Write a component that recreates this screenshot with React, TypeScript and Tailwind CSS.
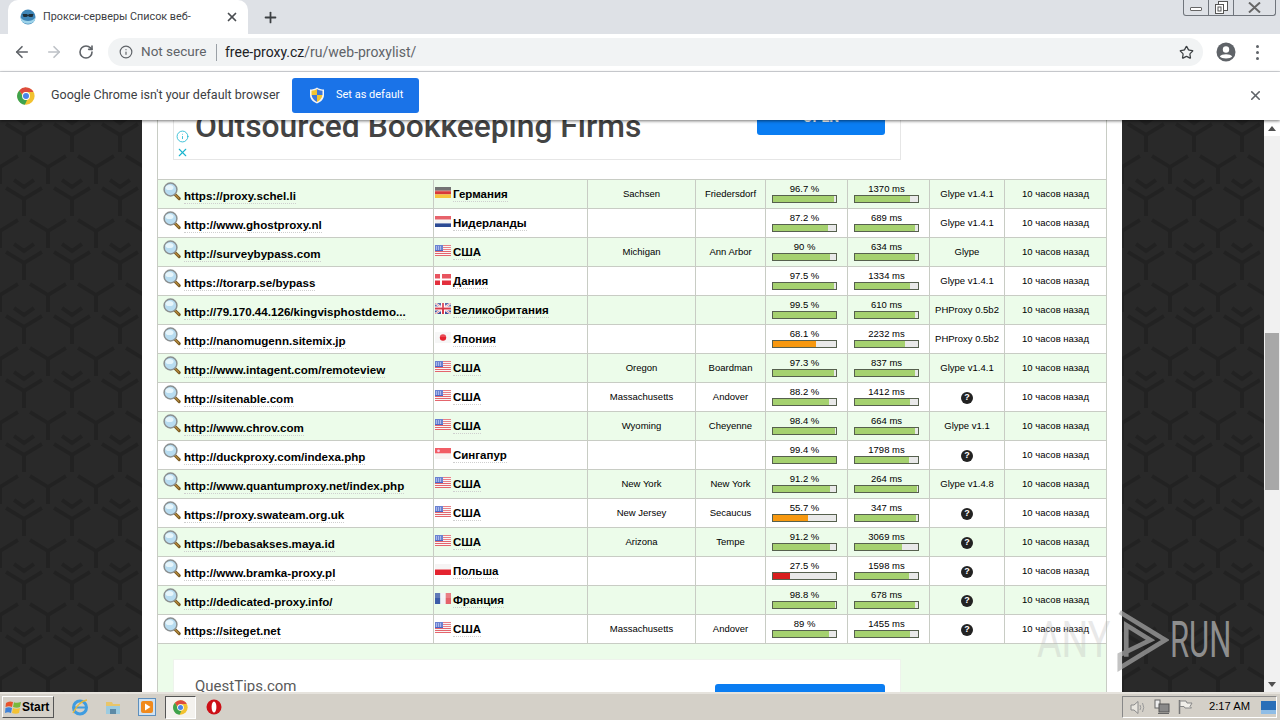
import React from "react";
import { ArrowLeft, ArrowRight, RotateCw, Star, X, Plus, Info } from "lucide-react";

type Row = { url: string; flag: string; country: string; region: string; city: string; up: number; ms: number; sp: number; type: string };

const rows: Row[] = [
  { url: "https://proxy.schel.li", flag: "de", country: "Германия", region: "Sachsen", city: "Friedersdorf", up: 96.7, ms: 1370, sp: 88, type: "Glype v1.4.1" },
  { url: "http://www.ghostproxy.nl", flag: "nl", country: "Нидерланды", region: "", city: "", up: 87.2, ms: 689, sp: 95, type: "Glype v1.4.1" },
  { url: "http://surveybypass.com", flag: "us", country: "США", region: "Michigan", city: "Ann Arbor", up: 90, ms: 634, sp: 95, type: "Glype" },
  { url: "https://torarp.se/bypass", flag: "dk", country: "Дания", region: "", city: "", up: 97.5, ms: 1334, sp: 88, type: "Glype v1.4.1" },
  { url: "http://79.170.44.126/kingvisphostdemo...", flag: "gb", country: "Великобритания", region: "", city: "", up: 99.5, ms: 610, sp: 96, type: "PHProxy 0.5b2" },
  { url: "http://nanomugenn.sitemix.jp", flag: "jp", country: "Япония", region: "", city: "", up: 68.1, ms: 2232, sp: 80, type: "PHProxy 0.5b2" },
  { url: "http://www.intagent.com/remoteview", flag: "us", country: "США", region: "Oregon", city: "Boardman", up: 97.3, ms: 837, sp: 95, type: "Glype v1.4.1" },
  { url: "http://sitenable.com", flag: "us", country: "США", region: "Massachusetts", city: "Andover", up: 88.2, ms: 1412, sp: 88, type: "?" },
  { url: "http://www.chrov.com", flag: "us", country: "США", region: "Wyoming", city: "Cheyenne", up: 98.4, ms: 664, sp: 95, type: "Glype v1.1" },
  { url: "http://duckproxy.com/indexa.php", flag: "sg", country: "Сингапур", region: "", city: "", up: 99.4, ms: 1798, sp: 85, type: "?" },
  { url: "http://www.quantumproxy.net/index.php", flag: "us", country: "США", region: "New York", city: "New York", up: 91.2, ms: 264, sp: 98, type: "Glype v1.4.8" },
  { url: "https://proxy.swateam.org.uk", flag: "us", country: "США", region: "New Jersey", city: "Secaucus", up: 55.7, ms: 347, sp: 97, type: "?" },
  { url: "https://bebasakses.maya.id", flag: "us", country: "США", region: "Arizona", city: "Tempe", up: 91.2, ms: 3069, sp: 75, type: "?" },
  { url: "http://www.bramka-proxy.pl", flag: "pl", country: "Польша", region: "", city: "", up: 27.5, ms: 1598, sp: 86, type: "?" },
  { url: "http://dedicated-proxy.info/", flag: "fr", country: "Франция", region: "", city: "", up: 98.8, ms: 678, sp: 95, type: "?" },
  { url: "https://siteget.net", flag: "us", country: "США", region: "Massachusetts", city: "Andover", up: 89, ms: 1455, sp: 87, type: "?" },
];

function Flag({ code }: { code: string }) {
  const body = () => {
    switch (code) {
      case "de":
        return (<><rect width="16" height="3.7" y="0" fill="#555" /><rect width="16" height="3.7" y="3.7" fill="#d8393a" /><rect width="16" height="3.6" y="7.4" fill="#f7c43c" /></>);
      case "nl":
        return (<><rect width="16" height="3.7" y="0" fill="#e2404a" /><rect width="16" height="3.7" y="3.7" fill="#f4f4f4" /><rect width="16" height="3.6" y="7.4" fill="#2c4a94" /></>);
      case "us":
        return (
          <>
            <rect width="16" height="11" fill="#f6f6f6" />
            {[0, 2, 4, 6, 8, 10].map((y) => (<rect key={y} y={y} width="16" height="1" fill="#e4656c" />))}
            <rect width="8" height="6" fill="#4a67c8" />
            {[1, 3, 5].map((x) => [1.5, 3.5].map((y) => (<rect key={x + "-" + y} x={x} y={y} width="1" height="1" fill="#dfe6ff" />)))}
          </>
        );
      case "dk":
        return (<><rect width="16" height="11" fill="#e32f3c" /><rect x="5" width="2" height="11" fill="#fff" /><rect y="4.5" width="16" height="2" fill="#fff" /></>);
      case "gb":
        return (
          <>
            <rect width="16" height="11" fill="#3d4f9a" />
            <path d="M0 0L16 11M16 0L0 11" stroke="#fff" strokeWidth="2" />
            <path d="M0 0L16 11M16 0L0 11" stroke="#d5505c" strokeWidth="0.7" />
            <rect x="6" width="4" height="11" fill="#fff" />
            <rect y="3.5" width="16" height="4" fill="#fff" />
            <rect x="7" width="2" height="11" fill="#d83a48" />
            <rect y="4.5" width="16" height="2" fill="#d83a48" />
          </>
        );
      case "jp":
        return (<><rect width="16" height="11" fill="#f6f6f6" /><circle cx="8" cy="5.5" r="3.2" fill="#e5232f" /></>);
      case "sg":
        return (<><rect width="16" height="5.5" fill="#ee3a44" /><rect y="5.5" width="16" height="5.5" fill="#f8f3f1" /><circle cx="3.5" cy="2.8" r="1.4" fill="#fbd" /></>);
      case "pl":
        return (<><rect width="16" height="5.5" fill="#f5f2f2" /><rect y="5.5" width="16" height="5.5" fill="#e4232f" /></>);
      case "fr":
        return (<><rect width="5.4" height="11" fill="#3c5ca8" /><rect x="5.4" width="5.3" height="11" fill="#f2f2f6" /><rect x="10.7" width="5.3" height="11" fill="#e4626a" /></>);
      default:
        return null;
    }
  };
  return (
    <svg width="16" height="11" viewBox="0 0 16 11" className="shrink-0">
      {body()}
      <rect width="16" height="5" fill="#ffffff" opacity="0.18" />
    </svg>
  );
}

function Magnifier() {
  return (
    <svg width="18" height="19" viewBox="0 0 18 19" className="shrink-0">
      <path d="M11 11.5L16.2 16.6" stroke="#7a5a22" strokeWidth="3" strokeLinecap="round" />
      <path d="M11.5 12L15.8 16.2" stroke="#d8a648" strokeWidth="1" strokeLinecap="round" />
      <circle cx="7.5" cy="7.5" r="6.4" fill="#b8dcf0" stroke="#8a8f90" strokeWidth="1.5" />
      <ellipse cx="6.5" cy="5.5" rx="4" ry="2.6" fill="#e6f5fb" />
    </svg>
  );
}

function Bar({ label, pct, color }: { label: string; pct: number; color: string }) {
  return (
    <div className="ml-[6px] flex w-[65px] flex-col items-center pt-[3px]">
      <div className="h-[12px] whitespace-nowrap text-[9.5px] leading-[12px]">{label}</div>
      <div className="h-[8px] w-full border border-[#56604e] bg-[#e9e9e9]">
        <div className="h-full" style={{ width: pct + "%", backgroundColor: color }} />
      </div>
    </div>
  );
}

function Pattern({ id }: { id: string }) {
  return (
    <svg className="block h-full w-full" aria-hidden="true">
      <defs>
        <pattern id={id} width="48" height="64" patternUnits="userSpaceOnUse">
          <rect width="48" height="64" fill="#292929" />
          <g fill="none" stroke="#222222" strokeWidth="4">
            <path d="M6 4L24 15L42 4M24 15V32" />
            <path d="M-18 36L0 47L18 36M0 47V64" />
            <path d="M30 36L48 47L66 36M48 47V64" />
            <path d="M14 -4L24 3L34 -4" />
            <path d="M14 60L24 67L34 60" />
          </g>
        </pattern>
      </defs>
      <rect width="100%" height="100%" fill={"url(#" + id + ")"} />
    </svg>
  );
}

function ChromeIcon({ size }: { size: number }) {
  return (
    <svg width={size} height={size} viewBox="0 0 48 48" className="shrink-0">
      <circle cx="24" cy="24" r="23" fill="#f2c230" />
      <path d="M24 1A23 23 0 0 1 44 13H24A11 11 0 0 0 13.6 20.5L6 9A23 23 0 0 1 24 1Z" fill="#dd4b3e" />
      <path d="M6 9L15 24A10 10 0 0 0 27 34L21 47A23 23 0 0 1 6 9Z" fill="#3fa34d" />
      <circle cx="24" cy="24" r="10.5" fill="#fff" />
      <circle cx="24" cy="24" r="8" fill="#4a85e8" />
    </svg>
  );
}

function Shield() {
  return (
    <svg width="16" height="17" viewBox="0 0 16 17" className="shrink-0">
      <path d="M8 0.5C10 2 12.5 2.5 15 2.5V8C15 12 12 15 8 16.5C4 15 1 12 1 8V2.5C3.5 2.5 6 2 8 0.5Z" fill="#f5f5f5" />
      <path d="M8 2C9.5 3 11.5 3.6 13.5 3.7V8H8Z" fill="#3f78d8" />
      <path d="M8 8H2.5V3.7C4.5 3.6 6.5 3 8 2Z" fill="#f4c430" />
      <path d="M8 8H13.4C13 11 11 13.5 8 15Z" fill="#f4c430" />
      <path d="M8 8V15C5 13.5 3 11 2.6 8Z" fill="#3f78d8" />
    </svg>
  );
}

function Cell({ children, className = "" }: { children?: React.ReactNode; className?: string }) {
  return <div className={"flex items-center justify-center border-l border-[#c8ccc4] pt-[1px] " + className}>{children}</div>;
}

function ProxyRow({ r, i }: { r: Row; i: number }) {
  const upColor = r.up < 40 ? "#d81e1e" : r.up < 70 ? "#f7980f" : "#a5d16f";
  return (
    <div className={"grid h-[29px] grid-cols-[275px_154px_108px_70px_82px_82px_75px_102px] border-b border-[#c8ccc4] font-['Liberation_Sans',sans-serif] text-black " + (i % 2 === 0 ? "bg-[#ecfcea]" : "bg-white")}>
      <div className="flex items-start pl-[5px] pt-[2px]">
        <Magnifier />
        <a className="ml-[3px] mt-[7px] whitespace-nowrap border-b border-dotted border-[#cfcfcf] text-[11.6px] font-bold leading-[14px]">{r.url}</a>
      </div>
      <div className="flex items-start border-l border-[#c8ccc4] pl-[1px] pt-[7px]">
        <Flag code={r.flag} />
        <span className="ml-[2px] whitespace-nowrap border-b border-dotted border-[#cfcfcf] text-[11.5px] font-bold leading-[14px]">{r.country}</span>
      </div>
      <Cell className="text-[9.5px]">{r.region}</Cell>
      <Cell className="text-[9.5px]">{r.city}</Cell>
      <div className="border-l border-[#c8ccc4]">
        <Bar label={r.up + " %"} pct={r.up} color={upColor} />
      </div>
      <div className="border-l border-[#c8ccc4]">
        <Bar label={r.ms + " ms"} pct={r.sp} color="#a5d16f" />
      </div>
      <Cell className="whitespace-nowrap text-[9.5px]">
        {r.type === "?" ? (
          <span className="flex h-[12px] w-[12px] items-center justify-center rounded-full bg-[#222] text-[9px] font-bold leading-none text-white">?</span>
        ) : (
          r.type
        )}
      </Cell>
      <Cell className="whitespace-nowrap text-[9.5px]">10 часов назад</Cell>
    </div>
  );
}

export default function App() {
  const ui = "font-['Roboto',sans-serif]";
  return (
    <div className={"relative flex h-[720px] w-[1280px] flex-col overflow-hidden bg-white " + ui}>
      {/* Tab strip */}
      <div className="relative h-[34px] shrink-0 bg-[#dee1e6]">
        <div className="flex h-full items-center pl-[8px]">
          <div className="flex h-[34px] w-[240px] items-center rounded-t-[10px] bg-white pl-[12px]">
            <svg width="16" height="16" viewBox="0 0 16 16" className="shrink-0">
              <circle cx="8" cy="8" r="7.5" fill="#3f86b8" />
              <path d="M1 9C4 13 12 13 15 9V11C13 16 3 16 1 11Z" fill="#9fd4ea" />
              <path d="M2.5 5H7L8 6L9 5H13.5L12.5 8H9.5L8 7L6.5 8H3.5Z" fill="#1f2f3a" />
            </svg>
            <span className="ml-[7px] w-[182px] shrink-0 whitespace-nowrap text-[10.8px] text-[#3c4043]">Прокси-серверы Список веб-</span>
            <X size={14} strokeWidth={3} className="shrink-0 text-[#4a4d51]" />
          </div>
          <Plus size={17} strokeWidth={2.5} className="ml-[14px] text-[#3c4043]" />
        </div>
        <div className="absolute right-[4px] top-0 flex h-[16px] w-[93px] rounded-b-[3px] border border-t-0 border-[#70757c]">
          <div className="flex w-[25px] items-center justify-center border-r border-[#70757c]">
            <div className="mt-[3px] h-[4px] w-[12px] rounded-[1px] border border-[#666] bg-white" />
          </div>
          <div className="flex w-[25px] items-center justify-center border-r border-[#70757c]">
            <svg width="13" height="13" viewBox="0 0 13 13"><rect x="3.5" y="0.5" width="9" height="9" fill="#fff" stroke="#555" /><rect x="0.5" y="3.5" width="8" height="9" fill="#fff" stroke="#555" /><rect x="3" y="6" width="3" height="4" fill="none" stroke="#555" /></svg>
          </div>
          <div className="flex flex-1 items-center justify-center">
            <svg width="13" height="11" viewBox="0 0 13 11"><path d="M1 0.5L6.5 5.5L12 0.5M1 10.5L6.5 5.5L12 10.5" fill="none" stroke="#666" strokeWidth="2" /></svg>
          </div>
        </div>
      </div>

      {/* Toolbar */}
      <div className="flex h-[38px] shrink-0 items-center border-b border-[#dadce0] bg-white pb-[1px] pl-[13px] pr-[13px]">
        <ArrowLeft size={18} strokeWidth={2.2} className="text-[#5f6368]" />
        <ArrowRight size={18} strokeWidth={2.2} className="ml-[14px] text-[#bdc1c6]" />
        <RotateCw size={16} strokeWidth={2.4} className="ml-[15px] text-[#5f6368]" />
        <div className="ml-[14px] flex h-[28px] w-[1095px] items-center rounded-full bg-[#f1f3f4] pl-[11px] pr-[9px]">
          <Info size={14} strokeWidth={2} className="text-[#5f6368]" />
          <span className="ml-[8px] w-[66px] whitespace-nowrap text-[13.5px] leading-none text-[#5f6368]">Not secure</span>
          <span className="ml-[9px] h-[17px] w-px bg-[#9aa0a6]" />
          <span className="ml-[8px] whitespace-nowrap text-[14px] leading-none text-[#202124]">
            free-proxy.cz<span className="text-[#5f6368]">/ru/web-proxylist/</span>
          </span>
          <Star size={15} strokeWidth={2} className="ml-auto text-[#3c4043]" />
        </div>
        <svg width="20" height="20" viewBox="0 0 20 20" className="ml-[13px] shrink-0">
          <circle cx="10" cy="10" r="9.5" fill="#5f6368" />
          <circle cx="10" cy="7.5" r="3.2" fill="#fff" />
          <path d="M3.8 14.5C5.5 11.6 14.5 11.6 16.2 14.5C14.5 17 5.5 17 3.8 14.5Z" fill="#fff" />
        </svg>
        <div className="ml-[20px] flex flex-col gap-[3px]">
          <span className="h-[3px] w-[3px] rounded-full bg-[#5f6368]" />
          <span className="h-[3px] w-[3px] rounded-full bg-[#5f6368]" />
          <span className="h-[3px] w-[3px] rounded-full bg-[#5f6368]" />
        </div>
      </div>

      {/* Infobar */}
      <div className="relative z-10 flex h-[48px] shrink-0 items-center bg-white pb-[1px] pl-[17px] pr-[17px] shadow-[0_1px_3px_rgba(0,0,0,0.55)]">
        <ChromeIcon size={18} />
        <span className="ml-[16px] w-[228px] whitespace-nowrap text-[12.5px] text-[#3c4043]">Google Chrome isn't your default browser</span>
        <div className="ml-[13px] flex h-[35px] w-[127px] items-center rounded-[3px] bg-[#1a73e8] pl-[17px]">
          <Shield />
          <span className="ml-[11px] whitespace-nowrap text-[11px] text-white">Set as default</span>
        </div>
        <X size={15} strokeWidth={2.5} className="ml-auto text-[#5f6368]" />
      </div>

      {/* Page */}
      <div className="flex min-h-0 flex-1">
        <div className="w-[142px] shrink-0"><Pattern id="pl" /></div>
        <div className="w-[980px] shrink-0 bg-white pl-[15px]">
          <div className="flex h-full w-[950px] flex-col overflow-hidden border-x border-[#c8ccc4]">
            {/* top ad */}
            <div className="h-[59px] shrink-0 overflow-hidden bg-white pl-[15px]">
              <div className="relative h-[40px] w-[728px] overflow-hidden border-x border-b border-[#e6e6e6]">
                <div className="flex h-full items-start">
                  <span className="ml-[21px] mt-[-14px] whitespace-nowrap font-['Roboto',sans-serif] text-[31.8px] font-medium leading-[40px] text-[#444444]">Outsourced Bookkeeping Firms</span>
                </div>
                <div className="absolute left-[583px] top-[-20px] flex h-[35px] w-[128px] items-center justify-center rounded-[3px] bg-[#0a7df2] text-[14px] font-bold text-white">OPEN</div>
                <div className="absolute left-0 top-[10px] flex flex-col items-center gap-[3px] pl-[2px] text-[#19b5cf]">
                  <Info size={13} strokeWidth={1.5} />
                  <X size={13} strokeWidth={2} />
                </div>
              </div>
            </div>
            {/* table */}
            <div className="shrink-0 border-t border-[#c8ccc4]">
              {rows.map((r, i) => (<ProxyRow key={i} r={r} i={i} />))}
            </div>
            {/* bottom ad */}
            <div className="flex-1 overflow-hidden bg-[#ecfcea] pl-[15px] pt-[15px]">
              <div className="flex h-[40px] w-[728px] border border-[#eef3ec] bg-white">
                <span className="ml-[21px] mt-[16px] whitespace-nowrap font-['Roboto',sans-serif] text-[15px] leading-[20px] text-[#5a5a5a]">QuestTips.com</span>
                <div className="ml-[419px] mt-[24px] h-[30px] w-[170px] rounded-[3px] bg-[#0a7df2]" />
              </div>
            </div>
          </div>
        </div>
        <div className="w-[142px] shrink-0"><Pattern id="pr" /></div>
        <div className="flex w-[16px] shrink-0 flex-col bg-[#f1f1f1]">
          <div className="flex h-[16px] items-center justify-center bg-white">
            <div className="h-0 w-0 border-x-[4px] border-b-[5px] border-x-transparent border-b-[#505050]" />
          </div>
          <div className="h-[197px]" />
          <div className="mx-[1px] h-[157px] bg-[#a8a8a8]" />
          <div className="flex-1" />
          <div className="flex h-[16px] items-center justify-center">
            <div className="h-0 w-0 border-x-[4px] border-t-[5px] border-x-transparent border-t-[#505050]" />
          </div>
        </div>
      </div>

      {/* Taskbar */}
      <div className="flex h-[28px] shrink-0 items-center border-t-2 border-[#e6e3dd] bg-[#d4d0c8] pl-[2px] pr-[3px] font-['Liberation_Sans',sans-serif]">
        <div className="flex h-[22px] w-[52px] items-center border border-b-[#555] border-l-[#fff] border-r-[#555] border-t-[#fff] pl-[2px]">
          <svg width="17" height="17" viewBox="0 0 17 17" className="shrink-0">
            <path d="M1 4Q4 1.5 8 3L7 8Q4 6.5 0.5 8Z" fill="#e8532b" />
            <path d="M9 3.2Q12 4.5 16 3L15 8Q12 9.5 8 8Z" fill="#79b93c" />
            <path d="M0.5 9Q4 7.5 7 9L6 14Q3 12.5 0 14Z" fill="#3f82d8" />
            <path d="M8 9Q11 10.5 15 9L14 14Q11 15.5 7 14Z" fill="#f4c233" />
          </svg>
          <span className="text-[12px] font-bold leading-none text-black">Start</span>
        </div>
        <svg width="18" height="18" viewBox="0 0 18 18" className="ml-[17px] shrink-0">
          <ellipse cx="9" cy="9.5" rx="6.5" ry="6.5" fill="none" stroke="#3f9ce0" strokeWidth="3" />
          <rect x="3" y="8.5" width="12" height="2" fill="#3f9ce0" />
          <path d="M2 15C5 9 10 3 16 2" fill="none" stroke="#e9b93a" strokeWidth="1.4" />
        </svg>
        <svg width="18" height="18" viewBox="0 0 18 18" className="ml-[15px] shrink-0">
          <path d="M2 4H8L9 6H16V15H2Z" fill="#e8c56a" />
          <rect x="2" y="8" width="14" height="8" fill="#9ccbe0" />
          <rect x="6" y="11" width="6" height="5" fill="#5c8aa6" />
        </svg>
        <svg width="18" height="18" viewBox="0 0 18 18" className="ml-[16px] shrink-0">
          <rect x="0.5" y="0.5" width="17" height="17" fill="#cfe2f3" stroke="#5d8fbd" />
          <rect x="3" y="3" width="12" height="12" rx="2" fill="#f08a1d" />
          <path d="M7 5.5L12.5 9L7 12.5Z" fill="#fff" />
        </svg>
        <div className="ml-[9px] flex h-[23px] w-[31px] items-center justify-center border border-b-[#fff] border-l-[#555] border-r-[#fff] border-t-[#555] bg-[#f4f2ee]">
          <ChromeIcon size={15} />
        </div>
        <svg width="16" height="16" viewBox="0 0 16 16" className="ml-[10px] shrink-0">
          <circle cx="8" cy="8" r="7.5" fill="#cc0f16" />
          <ellipse cx="8" cy="8" rx="2.4" ry="5.6" fill="#fff" />
        </svg>
        <div className="ml-auto flex h-[22px] w-[155px] items-center border border-b-[#fff] border-l-[#888] border-r-[#fff] border-t-[#888] pl-[7px]">
          <svg width="16" height="15" viewBox="0 0 16 15" className="shrink-0">
            <path d="M1 5H4L8 1.5V13.5L4 10H1Z" fill="#e9e6df" stroke="#8a8a8a" />
            <path d="M10 5Q11.5 7.5 10 10M12.5 3Q15 7.5 12.5 12" fill="none" stroke="#9a9a9a" />
          </svg>
          <svg width="16" height="16" viewBox="0 0 16 16" className="ml-[8px] shrink-0">
            <rect x="1" y="1" width="5" height="8" fill="#eee" stroke="#666" />
            <rect x="5" y="5" width="10" height="8" fill="#888" stroke="#555" />
            <rect x="4" y="14" width="11" height="1" fill="#666" />
          </svg>
          <svg width="16" height="16" viewBox="0 0 16 16" className="ml-[7px] shrink-0">
            <path d="M2.5 1V15" stroke="#777" strokeWidth="1.5" />
            <path d="M3 2H9L10 4H15L13 7.5L14.5 9H8L7 7.5H3Z" fill="#f1efe9" stroke="#888" />
          </svg>
          <span className="ml-[16px] w-[42px] whitespace-nowrap text-[11.2px] leading-none text-black">2:17 AM</span>
          <svg width="15" height="13" viewBox="0 0 15 13" className="ml-[11px] shrink-0">
            <rect width="15" height="13" fill="#2a6fb8" />
            <rect y="9" width="15" height="4" fill="#8fbde6" />
          </svg>
        </div>
      </div>

      {/* Watermark */}
      <div className="pointer-events-none absolute left-[1037px] top-[606px] flex h-[68px] items-start">
        <span className="w-[80px] origin-left scale-x-[0.75] font-['Roboto',sans-serif] text-[50px] leading-[68px] text-[#b8b8b8] opacity-30">ANY</span>
        <svg width="52" height="68" viewBox="0 0 56 68" className="shrink-0">
          <path d="M3 4L52 34L3 64V50L36 34L10 18V52" fill="none" stroke="#a9a9a9" strokeWidth="5" opacity="0.7" />
        </svg>
        <span className="ml-[1px] origin-left scale-x-[0.62] font-['Roboto',sans-serif] text-[50px] leading-[68px] text-[#8e8e8e]">RUN</span>
      </div>
    </div>
  );
}
